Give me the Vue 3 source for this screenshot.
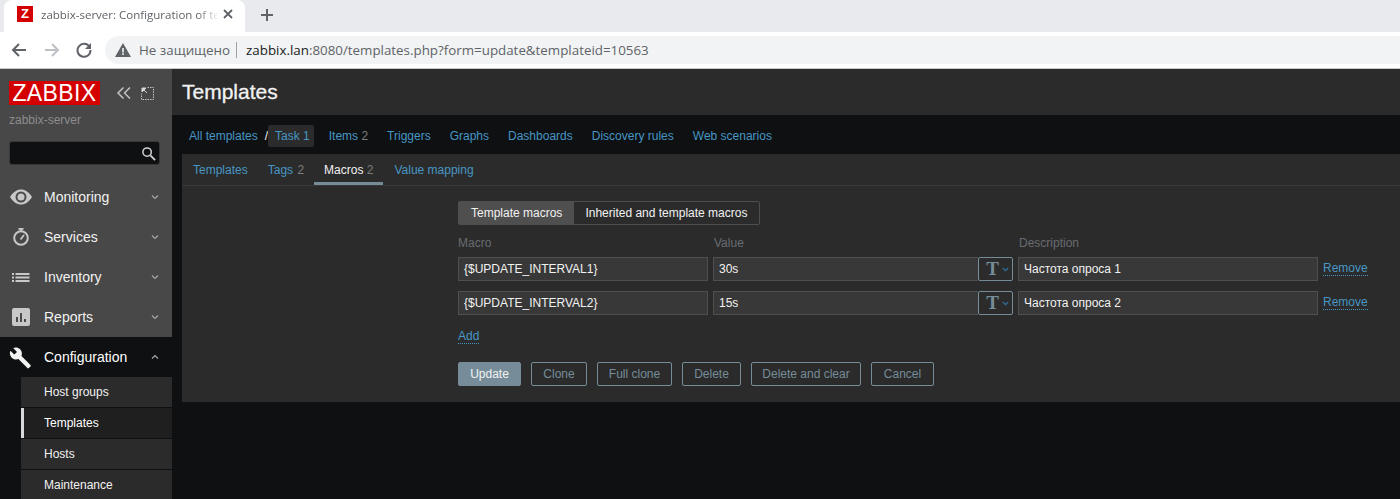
<template>
  <div class="window">
    <div class="tabstrip">
      <div class="tab">
        <span class="favicon">Z</span>
        <span class="tab-title">zabbix-server: Configuration of te</span>
        <svg class="tab-close" width="10" height="10" viewBox="0 0 10 10"><path d="M1 1l8 8M9 1l-8 8" stroke="#5f6368" stroke-width="1.8" /></svg>
      </div>
      <svg class="new-tab" width="14" height="14" viewBox="0 0 14 14"><path d="M7 1v12M1 7h12" stroke="#5f6368" stroke-width="2" /></svg>
    </div>
    <div class="toolbar">
      <svg class="nav-btn" width="16" height="16" viewBox="0 0 16 16"><path d="M15 8H2M8 2L2 8l6 6" fill="none" stroke="#5f6368" stroke-width="2" /></svg>
      <svg class="nav-btn" width="16" height="16" viewBox="0 0 16 16"><path d="M15 8H2M8 2L2 8l6 6" fill="none" stroke="#bdc1c6" stroke-width="2" transform="matrix(-1 0 0 1 16 0)" /></svg>
      <svg class="nav-btn reload" width="16" height="16" viewBox="0 0 16 16"><path d="M13.6 5A6.5 6.5 0 1 0 14.5 8" fill="none" stroke="#5f6368" stroke-width="2" /><path d="M15 1v6H9z" fill="#5f6368" /></svg>
      <div class="omnibox">
        <svg width="16" height="14" viewBox="0 0 16 14"><path d="M8 0l8 14H0z" fill="#5f6368" /><path d="M7.2 5h1.6v4.500H7.200zM7.200 10.300h1.600V12H7.200z" fill="#f1f3f4" /></svg>
        <span class="insecure">Не защищено</span>
        <span class="omni-sep"></span>
        <span class="url"><b>zabbix.lan</b>:8080/templates.php?form=update&amp;templateid=10563</span>
      </div>
    </div>

    <div class="page">
      <aside class="sidebar">
        <div class="logo-row">
          <span class="logo">ZABBIX</span>
          <svg class="collapse" width="16" height="14" viewBox="0 0 16 14"><path d="M7.500 1.500L2 7l5.500 5.500M14 1.500L8.500 7l5.500 5.500" fill="none" stroke="#c4c4c4" stroke-width="1.500" /></svg>
          <svg class="kiosk" width="13" height="13" viewBox="0 0 13 13"><path d="M6.500.500h6v12H.500v-6" fill="none" stroke="#c4c4c4" stroke-dasharray="1.500 1" /><path d="M1 1h4L1 5zM3 3l3 3" fill="#d8d8d8" stroke="#d8d8d8" /></svg>
        </div>
        <div class="server">zabbix-server</div>
        <div class="search">
          <svg width="15" height="15" viewBox="0 0 16 16"><circle cx="6.500" cy="6.500" r="4.500" fill="none" stroke="#d0d0d0" stroke-width="1.600" /><path d="M10 10l5 5" stroke="#d0d0d0" stroke-width="2" /></svg>
        </div>

        <nav class="menu">
          <div v-for="item in menu" :key="item.label" class="menu-item" :class="{ open: item.open }">
            <svg class="menu-icon" width="24" height="24" viewBox="0 0 24 24" v-html="item.icon"></svg>
            <span class="menu-label">{{ item.label }}</span>
            <svg class="caret" width="8" height="6" viewBox="0 0 8 6"><path :d="item.open ? 'M1 4.500L4 1.500l3 3' : 'M1 1.500L4 4.500l3-3'" fill="none" stroke="#a8a8a8" stroke-width="1.200" /></svg>
          </div>
        </nav>
        <div class="submenu">
          <div v-for="sub in submenu" :key="sub" class="sub-item" :class="{ active: sub === 'Templates' }">{{ sub }}</div>
        </div>
      </aside>

      <main class="main">
        <header class="page-head"><h1>Templates</h1></header>

        <div class="crumbs">
          <a class="link">All templates</a>
          <span class="slash">/</span>
          <a class="link current">Task 1</a>
          <a class="link item-link">Items <i>2</i></a>
          <a class="link">Triggers</a>
          <a class="link">Graphs</a>
          <a class="link">Dashboards</a>
          <a class="link">Discovery rules</a>
          <a class="link">Web scenarios</a>
        </div>

        <section class="card">
          <div class="tabs">
            <a class="tab-link">Templates</a>
            <a class="tab-link">Tags <i>2</i></a>
            <a class="tab-link selected">Macros <i>2</i></a>
            <a class="tab-link">Value mapping</a>
          </div>

          <div class="form">
            <div class="segments">
              <span class="segment on">Template macros</span>
              <span class="segment">Inherited and template macros</span>
            </div>

            <div class="macro-grid heads">
              <span>Macro</span>
              <span>Value</span>
              <span>Description</span>
            </div>
            <div v-for="row in macros" :key="row.macro" class="macro-grid row">
              <div class="field">{{ row.macro }}</div>
              <div class="value-group">
                <div class="field">{{ row.value }}</div>
                <div class="type-btn">
                  <span class="type-t">T</span>
                  <svg width="7" height="5" viewBox="0 0 7 5"><path d="M.8 1l2.700 2.700L6.200 1" fill="none" stroke="#2f6f9f" stroke-width="1.200" /></svg>
                </div>
              </div>
              <div class="field">{{ row.description }}</div>
              <a class="dotted remove">Remove</a>
            </div>

            <a class="dotted add">Add</a>

            <div class="actions">
              <button class="btn primary">Update</button>
              <button v-for="b in buttons" :key="b" class="btn">{{ b }}</button>
            </div>
          </div>
        </section>
      </main>
    </div>
  </div>
</template>

<script setup>
const menu = [
  {
    label: 'Monitoring',
    icon: '<path d="M1 12c3-5 7-7.500 11-7.500s8 2.500 11 7.500c-3 5-7 7.500-11 7.500S4 17 1 12z" fill="#c8c8c8"/><circle cx="12" cy="12" r="5.500" fill="#4a4a4a"/><circle cx="12" cy="12" r="3.500" fill="#c8c8c8"/>'
  },
  {
    label: 'Services',
    icon: '<path d="M9.500 3h5v1.800h-5z" fill="#c8c8c8"/><circle cx="12" cy="13" r="6.800" fill="none" stroke="#c8c8c8" stroke-width="2"/><path d="M12 4v3M11.500 14.500l3.500-4.500" stroke="#c8c8c8" stroke-width="1.800"/>'
  },
  {
    label: 'Inventory',
    icon: '<path d="M3 8h2v2H3zM3 11.500h2v2H3zM3 15h2v2H3zM6.500 8h14v2h-14zM6.500 11.500h14v2h-14zM6.500 15h14v2h-14z" fill="#c8c8c8"/>'
  },
  {
    label: 'Reports',
    icon: '<rect x="3" y="3" width="18" height="18" rx="2" fill="#c8c8c8"/><path d="M7 12h2v5H7zM11 8h2v9h-2zM15 14h2v3h-2z" fill="#4a4a4a"/>'
  },
  {
    label: 'Configuration',
    open: true,
    icon: '<path d="M21.500 20l-9-9c.9-2.300.4-4.900-1.400-6.700C9.200 2.400 6.500 2 4.200 3L8 6.900 5.300 9.600 1.400 5.800C.3 8.100.8 10.800 2.700 12.700c1.800 1.800 4.400 2.300 6.700 1.400l9 9c.4.400 1 .4 1.400 0l1.700-1.700c.4-.4.400-1 0-1.400z" fill="#f2f2f2"/>'
  }
]

const submenu = ['Host groups', 'Templates', 'Hosts', 'Maintenance']

const macros = [
  { macro: '{$UPDATE_INTERVAL1}', value: '30s', description: 'Частота опроса 1' },
  { macro: '{$UPDATE_INTERVAL2}', value: '15s', description: 'Частота опроса 2' }
]

const buttons = ['Clone', 'Full clone', 'Delete', 'Delete and clear', 'Cancel']
</script>

<style>
html, body {
  margin: 0;
  background: #0e1012;
}
</style>

<style scoped>
.window {
  width: 1400px;
  height: 499px;
  overflow: hidden;
  display: flex;
  flex-direction: column;
  font-family: "Liberation Sans", Arial, sans-serif;
  font-size: 12px;
}
.tabstrip {
  height: 32px;
  flex: none;
  background: #e8eaed;
  display: flex;
  align-items: flex-start;
  padding-left: 4px;
  font-family: "Open Sans", sans-serif;
}
.tab {
  width: 241px;
  height: 32px;
  box-sizing: border-box;
  background: #fff;
  border-radius: 8px 8px 0 0;
  display: flex;
  align-items: center;
  padding: 0 12px 4px 13px;
}
.favicon {
  width: 16px;
  height: 16px;
  background: #d40000;
  color: #fff;
  font: bold 13px/16px "Liberation Sans", sans-serif;
  text-align: center;
  flex: none;
}
.tab-title {
  margin-left: 8px;
  flex: 1;
  font-size: 11.500px;
  color: #5f6368;
  white-space: nowrap;
  overflow: hidden;
  -webkit-mask-image: linear-gradient(90deg, #000 88%, transparent);
  mask-image: linear-gradient(90deg, #000 88%, transparent);
}
.tab-close {
  margin-left: 4px;
  flex: none;
}
.new-tab {
  margin: 8px 0 0 15px;
}
.toolbar {
  height: 36px;
  flex: none;
  background: #fff;
  display: flex;
  align-items: center;
  padding: 2px 0 2px 11px;
  box-sizing: border-box;
  gap: 17px;
}
.reload {
  margin-left: -1px;
}
.omnibox {
  width: 1295px;
  margin-left: -4px;
  margin-right: -100px;
  height: 28px;
  background: #f1f3f4;
  border-radius: 14px 0 0 14px;
  display: flex;
  align-items: center;
  padding-left: 10px;
  box-sizing: border-box;
  font-family: "Open Sans", sans-serif;
  font-size: 13.350px;
  color: #5f6368;
}
.insecure {
  margin-left: 8px;
}
.omni-sep {
  width: 1px;
  height: 16px;
  background: #9aa0a6;
  margin: 0 9px 0 6px;
}
.url {
  color: #5f6368;
}
.url b {
  color: #202124;
  font-weight: 400;
}
.page {
  flex: 1;
  min-height: 0;
  display: flex;
  border-top: 1px solid #c8c9cb;
  background: #0e1012;
}
.sidebar {
  width: 172px;
  flex: none;
  background: #484848;
  display: flex;
  flex-direction: column;
  overflow: hidden;
}
.sidebar > * {
  flex: none;
}
.logo-row {
  display: flex;
  align-items: center;
  padding: 12px 0 0 9px;
  height: 24px;
}
.logo {
  width: 91px;
  height: 24px;
  background: #d40000;
  color: #fff;
  font-size: 23px;
  line-height: 25px;
  text-align: center;
  letter-spacing: 0.400px;
}
.collapse {
  margin-left: 16px;
}
.kiosk {
  margin-left: 9px;
}
.server {
  margin: 8px 0 0 9px;
  color: #8c8c8c;
  height: 14px;
  line-height: 14px;
}
.search {
  margin: 14px 0 0 9px;
  width: 151px;
  height: 24px;
  box-sizing: border-box;
  background: #0e1012;
  border: 1px solid #383838;
  border-radius: 3px;
  display: flex;
  align-items: center;
  justify-content: flex-end;
  padding-right: 3px;
}
.menu {
  margin-top: 12px;
}
.menu-item {
  height: 40px;
  display: flex;
  align-items: center;
  padding-left: 9px;
  color: #f2f2f2;
  font-size: 14px;
}
.menu-item.open {
  background: #0e1012;
  color: #fff;
}
.menu-icon {
  flex: none;
}
.menu-label {
  margin-left: 11px;
  flex: 1;
}
.caret {
  margin-right: 13px;
}
.submenu {
  flex: 1 0 auto !important;
  padding-left: 21px;
  background: #0e1012;
}
.sub-item {
  height: 30px;
  line-height: 30px;
  margin-bottom: 1px;
  padding-left: 23px;
  background: #2b2b2b;
  color: #f2f2f2;
}
.sub-item.active {
  background: #1f1f1f;
  box-shadow: inset 3px 0 0 #d8d8d8;
  color: #fff;
}
.main {
  flex: 1;
  min-width: 0;
}
.page-head {
  height: 46px;
  background: #2b2b2b;
  display: flex;
  align-items: center;
  padding-left: 10px;
}
.page-head h1 {
  margin: 0;
  color: #f2f2f2;
  font-size: 21px;
  font-weight: 400;
  -webkit-text-stroke: 0.300px #f2f2f2;
}
.crumbs {
  height: 39px;
  box-sizing: border-box;
  display: flex;
  align-items: center;
  padding: 2px 0 0 17px;
  gap: 19px;
}
.link, .tab-link {
  color: #4796c4;
}
.slash {
  color: #f2f2f2;
  margin: 0 -19px 0 -12px;
}
.link.current {
  background: #2b2b2b;
  border-radius: 2px;
  padding: 0 4px 0 7px;
  height: 22px;
  line-height: 22px;
}
.item-link {
  margin-left: -4px;
}
.item-link i {
  margin-left: 0;
}
i {
  font-style: normal;
  color: #7c7c7c;
  margin-left: 1px;
}
.card {
  margin-left: 10px;
  height: 248px;
  background: #2b2b2b;
}
.tabs {
  height: 31px;
  border-bottom: 1px solid #383838;
  display: flex;
}
.tab-link {
  padding: 0 10px;
  line-height: 33px;
  height: 28px;
}
.tab-link:first-child {
  padding-left: 11px;
  margin-right: 0;
}
.tab-link.selected {
  color: #f2f2f2;
  border-bottom: 3px solid #768d99;
  margin-right: 1px;
}
.tab-link.selected i {
  margin-left: 0;
}
.form {
  padding: 15px 0 0 276px;
  display: flex;
  flex-direction: column;
  align-items: flex-start;
}
.segments {
  display: flex;
  height: 24px;
  box-sizing: border-box;
  border: 1px solid #4f4f4f;
  border-radius: 2px;
  color: #f2f2f2;
  line-height: 22px;
}
.segment {
  padding: 0 12px 0 11px;
}
.segment.on {
  background: #4f4f4f;
  padding: 0 12px;
}
.macro-grid {
  display: grid;
  grid-template-columns: 250px 300px 300px auto;
  column-gap: 5px;
}
.heads {
  margin-top: 12px;
  height: 20px;
  line-height: 12px;
  color: #686c71;
}
.heads span + span {
  padding-left: 1px;
}
.row {
  margin-bottom: 10px;
  align-items: center;
}
.field {
  height: 24px;
  box-sizing: border-box;
  background: #383838;
  border: 1px solid #4f4f4f;
  padding: 0 5px;
  line-height: 22px;
  color: #f2f2f2;
  min-width: 0;
}
.value-group {
  display: flex;
}
.value-group .field {
  flex: 1;
  border-right: none;
}
.type-btn {
  width: 35px;
  height: 24px;
  box-sizing: border-box;
  border: 1px solid #768d99;
  border-radius: 2px;
  display: flex;
  align-items: center;
  justify-content: flex-end;
  gap: 3px;
  padding-right: 3px;
}
.type-t {
  font: bold 19px/22px "Liberation Serif", serif;
  color: #768d99;
}
.dotted {
  color: #4796c4;
  border-bottom: 1px dotted #4796c4;
  line-height: 13px;
}
.remove {
  justify-self: start;
}
.add {
  margin-top: 5px;
}
.actions {
  margin-top: 18px;
  display: flex;
  gap: 10px;
}
.btn {
  height: 24px;
  padding: 0;
  width: 63px;
  box-sizing: border-box;
  background: transparent;
  border: 1px solid #768d99;
  border-radius: 2px;
  color: #768d99;
  font: 12px "Liberation Sans", sans-serif;
}
.btn:nth-child(2) {
  width: 56px;
}
.btn:nth-child(3) {
  width: 75px;
}
.btn:nth-child(4) {
  width: 59px;
}
.btn:nth-child(5) {
  width: 110px;
}
.btn.primary {
  background: #768d99;
  color: #f2f2f2;
}
</style>
